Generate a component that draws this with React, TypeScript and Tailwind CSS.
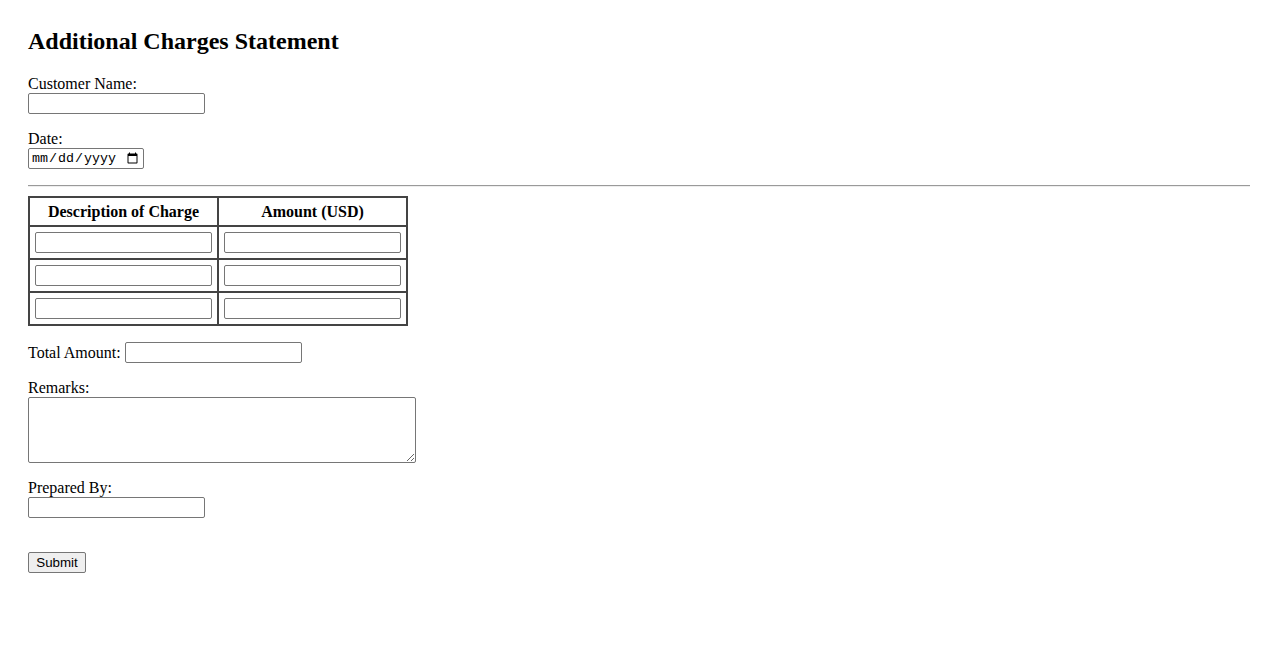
import React from 'react';

const inputCls =
  'block w-[177px] h-[21px] border border-[#767676] rounded-[2px] bg-white px-[2px] text-[13.33px] [font-family:Arial,"Liberation_Sans",sans-serif]';

const Field: React.FC<{ label: string; children: React.ReactNode }> = ({ label, children }) => (
  <div className="mb-4">
    <label className="block leading-[18px]">{label}</label>
    {children}
  </div>
);

export default function App() {
  const rows = [0, 1, 2];

  return (
    <div className="min-h-screen bg-white p-[28px] text-[16px] text-black [font-family:'Liberation_Serif','Times_New_Roman',serif]">
      <h2 className="mb-5 text-[24px] font-bold leading-[27px]">Additional Charges Statement</h2>

      <form onSubmit={(e) => e.preventDefault()}>
        <Field label="Customer Name:">
          <input type="text" className={inputCls} />
        </Field>

        <Field label="Date:">
          <input
            type="date"
            className="block w-[116px] h-[21px] border border-[#767676] rounded-[2px] bg-white px-[2px] text-[13.33px] [font-family:'Liberation_Mono',monospace]"
          />
        </Field>

        <div className="mb-[9px] border-t border-b border-t-[#9a9a9a] border-b-[#eeeeee]" />

        <table className="mb-4 border-collapse border-2 border-[#444]">
          <thead>
            <tr className="h-[29px]">
              <th className="w-[189px] border-2 border-[#444] px-[6px] text-[16px] font-bold">Description of Charge</th>
              <th className="w-[188px] border-2 border-[#444] px-[6px] text-[16px] font-bold">Amount (USD)</th>
            </tr>
          </thead>
          <tbody>
            {rows.map((r) => (
              <tr key={r} className="h-[33px]">
                <td className="border-2 border-[#444] px-[5px]">
                  <input type="text" className={inputCls} />
                </td>
                <td className="border-2 border-[#444] px-[5px]">
                  <input type="text" className={inputCls} />
                </td>
              </tr>
            ))}
          </tbody>
        </table>

        <div className="mb-4 flex items-center gap-[4px] leading-[20px]">
          <label>Total Amount:</label>
          <input type="text" className={inputCls} />
        </div>

        <Field label="Remarks:">
          <textarea className="block w-[388px] h-[66px] border border-[#767676] rounded-[2px] bg-white p-[2px] text-[13.33px] [font-family:'Liberation_Mono',monospace]" />
        </Field>

        <Field label="Prepared By:">
          <input type="text" className={inputCls} />
        </Field>

        <div className="pt-[16px]">
          <button
            type="submit"
            className="h-[21px] w-[58px] border border-[#767676] rounded-[2px] bg-[#efefef] text-[13.33px] leading-[19px] [font-family:Arial,'Liberation_Sans',sans-serif]"
          >
            Submit
          </button>
        </div>
      </form>
    </div>
  );
}
